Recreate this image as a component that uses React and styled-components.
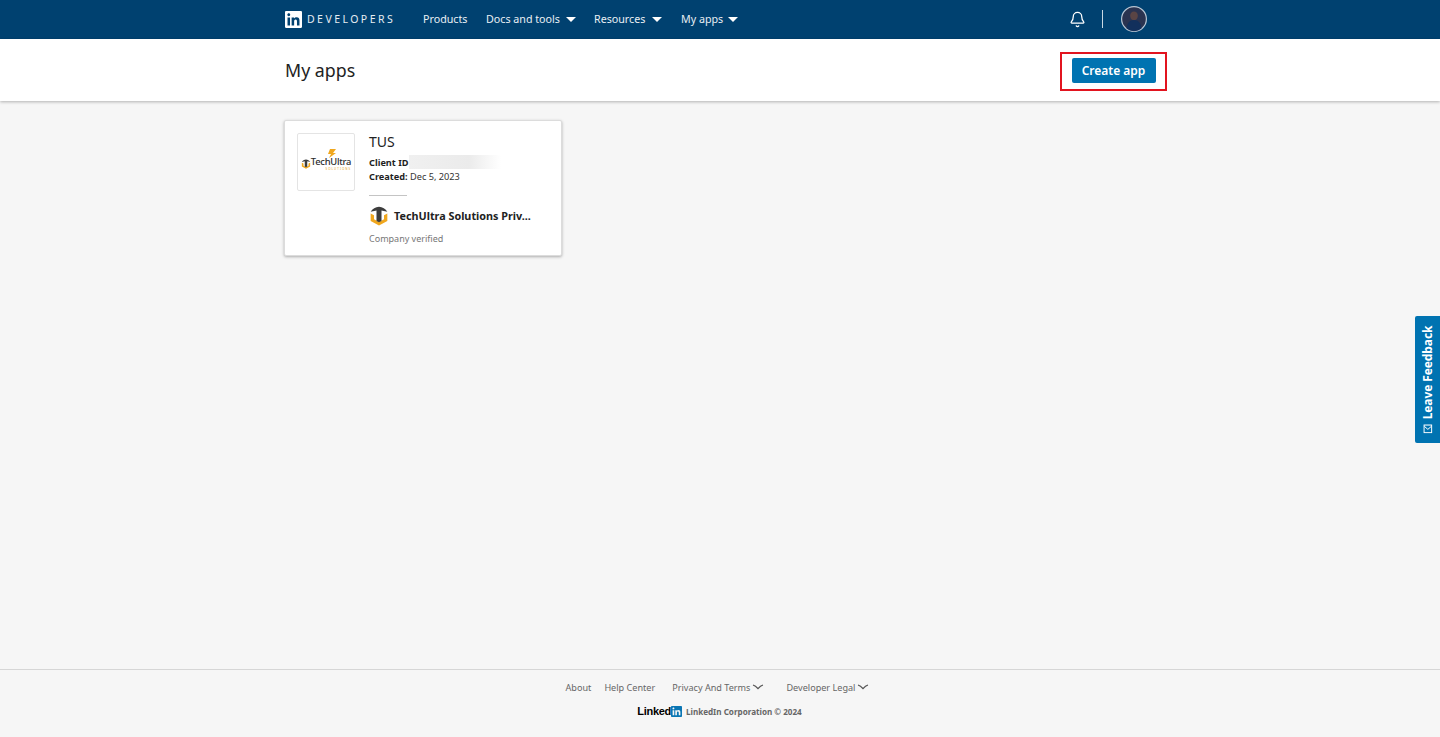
import React from "react";
import styled, { createGlobalStyle } from "styled-components";
import { SiLinkedin } from "react-icons/si";
import { Bell } from "lucide-react";

const GlobalStyle = createGlobalStyle`
  html, body {
    margin: 0;
    padding: 0;
    background: #f6f6f6;
    font-family: "Noto Sans", "Open Sans", sans-serif;
    overflow: hidden;
  }
  * {
    box-sizing: border-box;
  }
`;

const Page = styled.div`
  height: 737px;
  display: flex;
  flex-direction: column;
`;

const Container = styled.div`
  width: 870px;
  margin-left: 285px;
  display: flex;
  align-items: center;
  height: 100%;
`;

const NavBar = styled.nav`
  height: 39px;
  padding-bottom: 1px;
  background: #004170;
  flex-shrink: 0;
`;

const Brand = styled.div`
  display: flex;
  align-items: center;
  width: 138px;
  color: #ffffff;
`;

const BrandText = styled.span`
  font-size: 10.5px;
  letter-spacing: 2.45px;
  margin-left: 5px;
  color: #e6edf2;
  white-space: nowrap;
`;

const NavLink = styled.a`
  display: flex;
  align-items: center;
  padding-bottom: 1px;
  color: #e9eff4;
  font-size: 10.7px;
  white-space: nowrap;
  margin-right: ${(p) => p.$gap || 0}px;
  width: ${(p) => p.$width}px;
`;

const Caret = styled.span`
  width: 0;
  height: 0;
  margin-left: auto;
  margin-top: 1px;
  border-left: 5px solid transparent;
  border-right: 5px solid transparent;
  border-top: 5px solid #ffffff;
`;

const NavRight = styled.div`
  margin-left: auto;
  display: flex;
  align-items: center;
  padding-right: 8px;
  color: #ffffff;
`;

const Divider = styled.span`
  width: 1px;
  height: 18px;
  background: #c9d8e3;
  margin: 0 18px 0 16px;
`;

const Avatar = styled.svg`
  width: 26px;
  height: 26px;
  display: block;
`;

const Header = styled.header`
  height: 62px;
  background: #ffffff;
  box-shadow: 0 1px 3px rgba(0, 0, 0, 0.28);
  flex-shrink: 0;
  position: relative;
`;

const Title = styled.h1`
  margin: 0;
  font-size: 17.8px;
  font-weight: 400;
  color: #222222;
`;

const Highlight = styled.div`
  margin-left: auto;
  margin-right: -12px;
  margin-top: 2px;
  width: 107px;
  height: 39px;
  padding-bottom: 2px;
  border: 2px solid #e2141f;
  display: flex;
  align-items: center;
  justify-content: center;
`;

const CreateButton = styled.button`
  width: 84px;
  height: 25px;
  padding: 0;
  border: none;
  border-radius: 2px;
  background: #0073b1;
  color: #ffffff;
  font-family: inherit;
  font-size: 12px;
  font-weight: 600;
`;

const Main = styled.main`
  flex: 1;
  padding-top: 19px;
`;

const Card = styled.section`
  width: 278px;
  height: 136px;
  margin-left: 284px;
  padding: 12px;
  display: flex;
  gap: 14px;
  background: #ffffff;
  border: 1px solid #dcdcdc;
  border-radius: 2px;
  box-shadow: 0 1px 3px rgba(0, 0, 0, 0.3);
`;

const LogoBox = styled.div`
  width: 58px;
  height: 58px;
  flex-shrink: 0;
  border: 1px solid #e4e4e4;
  border-radius: 2px;
  display: flex;
  align-items: center;
  justify-content: center;
  padding-top: 3px;
`;

const LogoStack = styled.div`
  position: relative;
  display: flex;
  flex-direction: column;
  align-items: flex-end;
`;

const LogoAccent = styled.svg`
  position: absolute;
  left: 16px;
  top: -8px;
  width: 10px;
  height: 9px;
`;

const LogoWord = styled.span`
  position: relative;
  font-size: 9.4px;
  font-weight: 500;
  line-height: 10px;
  letter-spacing: -0.25px;
  color: #2b2b2b;
  white-space: nowrap;
`;

const LogoTag = styled.span`
  font-size: 3px;
  line-height: 4px;
  letter-spacing: 1px;
  color: #e6a321;
  white-space: nowrap;
`;

const CardBody = styled.div`
  flex: 1;
  min-width: 0;
`;

const AppName = styled.h2`
  margin: 0;
  font-size: 14px;
  line-height: 18px;
  font-weight: 400;
  color: #222222;
`;

const MetaRow = styled.div`
  display: flex;
  align-items: center;
  height: 14px;
  font-size: 9.2px;
  color: #333333;
  margin-top: ${(p) => p.$top || 0}px;
  white-space: pre;
`;

const MetaLabel = styled.span`
  font-weight: 700;
  color: #1f1f1f;
`;

const BlurredId = styled.span`
  width: 92px;
  height: 14px;
  background: linear-gradient(90deg, #f0f0f0 0%, #ebebeb 65%, #ffffff 100%);
`;

const Rule = styled.hr`
  width: 38px;
  height: 1px;
  margin: 12px 0 10px;
  border: none;
  background: #c4c4c4;
`;

const CompanyRow = styled.div`
  display: flex;
  align-items: center;
  gap: 5px;
`;

const CompanyName = styled.span`
  margin-top: -1px;
  font-size: 10.8px;
  font-weight: 700;
  color: #222222;
  white-space: nowrap;
`;

const Verified = styled.div`
  margin-top: 6px;
  font-size: 9px;
  line-height: 13px;
  color: #777777;
`;

const Footer = styled.footer`
  height: 68px;
  flex-shrink: 0;
  border-top: 1px solid #d6d6d6;
  display: flex;
  flex-direction: column;
  align-items: center;
`;

const FooterLinks = styled.div`
  display: flex;
  align-items: center;
  height: 14px;
  margin-top: 10px;
  margin-left: -5px;
`;

const FooterLink = styled.a`
  display: flex;
  align-items: center;
  gap: 2px;
  font-size: 9.1px;
  color: #666666;
  white-space: nowrap;
  margin-right: ${(p) => p.$gap || 0}px;
`;

const Copyright = styled.div`
  display: flex;
  align-items: center;
  margin-top: 11px;
  margin-left: -1px;
`;

const LinkedWord = styled.span`
  font-family: "Liberation Sans", Arial, sans-serif;
  font-size: 11px;
  font-weight: 700;
  letter-spacing: -0.3px;
  color: #000000;
`;

const CopyrightText = styled.span`
  font-size: 8.1px;
  font-weight: 700;
  color: #666666;
  margin-left: 4px;
`;

const FeedbackTab = styled.button`
  position: fixed;
  right: 0;
  top: 316px;
  width: 25px;
  height: 127px;
  padding: 0;
  border: none;
  border-radius: 2px 0 0 2px;
  background: #0073b1;
  color: #ffffff;
  display: flex;
  align-items: center;
  justify-content: center;
  font-family: inherit;
`;

const FeedbackLabel = styled.span`
  display: flex;
  align-items: center;
  gap: 5px;
  transform: rotate(-90deg);
  white-space: nowrap;
  font-size: 12px;
  font-weight: 700;
  letter-spacing: -0.1px;
`;

const HexMark = ({ size }) => (
  <svg width={size} height={size} viewBox="0 0 24 24" style={{ flexShrink: 0 }}>
    <path d="M2 9v9l10 5.500L22 18V9l-4 2v5l-6 3.300L6 16v-5z" fill="#f0a71e" />
    <path d="M12 1c4 .5 8 2.500 10 6l-7-1.500V18l-3 1.600L9 18V5.500L2 7c2-3.500 6-5.500 10-6z" fill="#3d3d3d" />
  </svg>
);

const FooterChevron = () => (
  <svg width="12" height="6" viewBox="0 0 12 6">
    <path d="M1 1c2 .6 3.600 2 5 3.600C7.400 3 9 1.600 11 1" fill="none" stroke="#555555" strokeWidth="1.300" />
  </svg>
);

const MailIcon = () => (
  <svg width="9" height="9" viewBox="0 0 9 9" style={{ transform: "rotate(90deg)" }}>
    <rect x="0.6" y="0.6" width="7.8" height="7.8" fill="none" stroke="#ffffff" strokeWidth="1.200" />
    <path d="M1 2l3.500 3L8 2" fill="none" stroke="#ffffff" />
  </svg>
);

export default function App() {
  return (
    <Page>
      <GlobalStyle />
      <NavBar>
        <Container>
          <Brand>
            <SiLinkedin size={17} />
            <BrandText>DEVELOPERS</BrandText>
          </Brand>
          <NavLink $gap={19} $width={44}>Products</NavLink>
          <NavLink $gap={18} $width={90}>
            Docs and tools
            <Caret />
          </NavLink>
          <NavLink $gap={19} $width={68}>
            Resources
            <Caret />
          </NavLink>
          <NavLink $width={57}>
            My apps
            <Caret />
          </NavLink>
          <NavRight>
            <Bell size={17} strokeWidth={1.8} />
            <Divider />
            <Avatar viewBox="0 0 26 26">
              <circle cx="13" cy="13" r="12.400" fill="#2a3350" stroke="#b8c6d4" strokeWidth="1.200" />
              <path d="M13 5.500c2.400 0 3.800 1.700 3.800 4 0 2.600-1.600 5-3.800 5s-3.800-2.400-3.800-5c0-2.300 1.400-4 3.800-4z" fill="#5a4444" />
              <path d="M5.500 22.500c.5-5.500 3.200-8.500 7.500-8.500s7 3 7.500 8.500a12 12 0 0 1-15 0z" fill="#12305c" />
            </Avatar>
          </NavRight>
        </Container>
      </NavBar>

      <Header>
        <Container>
          <Title>My apps</Title>
          <Highlight>
            <CreateButton>Create app</CreateButton>
          </Highlight>
        </Container>
      </Header>

      <Main>
        <Card>
          <LogoBox>
            <HexMark size={10} />
            <LogoStack>
              <LogoAccent viewBox="0 0 10 9">
                <path d="M3 0h6L6 4h3L2 9l2-4H1z" fill="#f0a71e" />
              </LogoAccent>
              <LogoWord>TechUltra</LogoWord>
              <LogoTag>SOLUTIONS</LogoTag>
            </LogoStack>
          </LogoBox>
          <CardBody>
            <AppName>TUS</AppName>
            <MetaRow $top={4}>
              <MetaLabel>Client ID</MetaLabel>
              <BlurredId />
            </MetaRow>
            <MetaRow>
              <MetaLabel>Created: </MetaLabel>
              Dec 5, 2023
            </MetaRow>
            <Rule />
            <CompanyRow>
              <HexMark size={20} />
              <CompanyName>TechUltra Solutions Priv...</CompanyName>
            </CompanyRow>
            <Verified>Company verified</Verified>
          </CardBody>
        </Card>
      </Main>

      <Footer>
        <FooterLinks>
          <FooterLink $gap={13}>About</FooterLink>
          <FooterLink $gap={17}>Help Center</FooterLink>
          <FooterLink $gap={22}>
            Privacy And Terms
            <FooterChevron />
          </FooterLink>
          <FooterLink>
            Developer Legal
            <FooterChevron />
          </FooterLink>
        </FooterLinks>
        <Copyright>
          <LinkedWord>Linked</LinkedWord>
          <SiLinkedin size={11} color="#0a76b4" />
          <CopyrightText>LinkedIn Corporation © 2024</CopyrightText>
        </Copyright>
      </Footer>

      <FeedbackTab>
        <FeedbackLabel>
          <MailIcon />
          Leave Feedback
        </FeedbackLabel>
      </FeedbackTab>
    </Page>
  );
}
